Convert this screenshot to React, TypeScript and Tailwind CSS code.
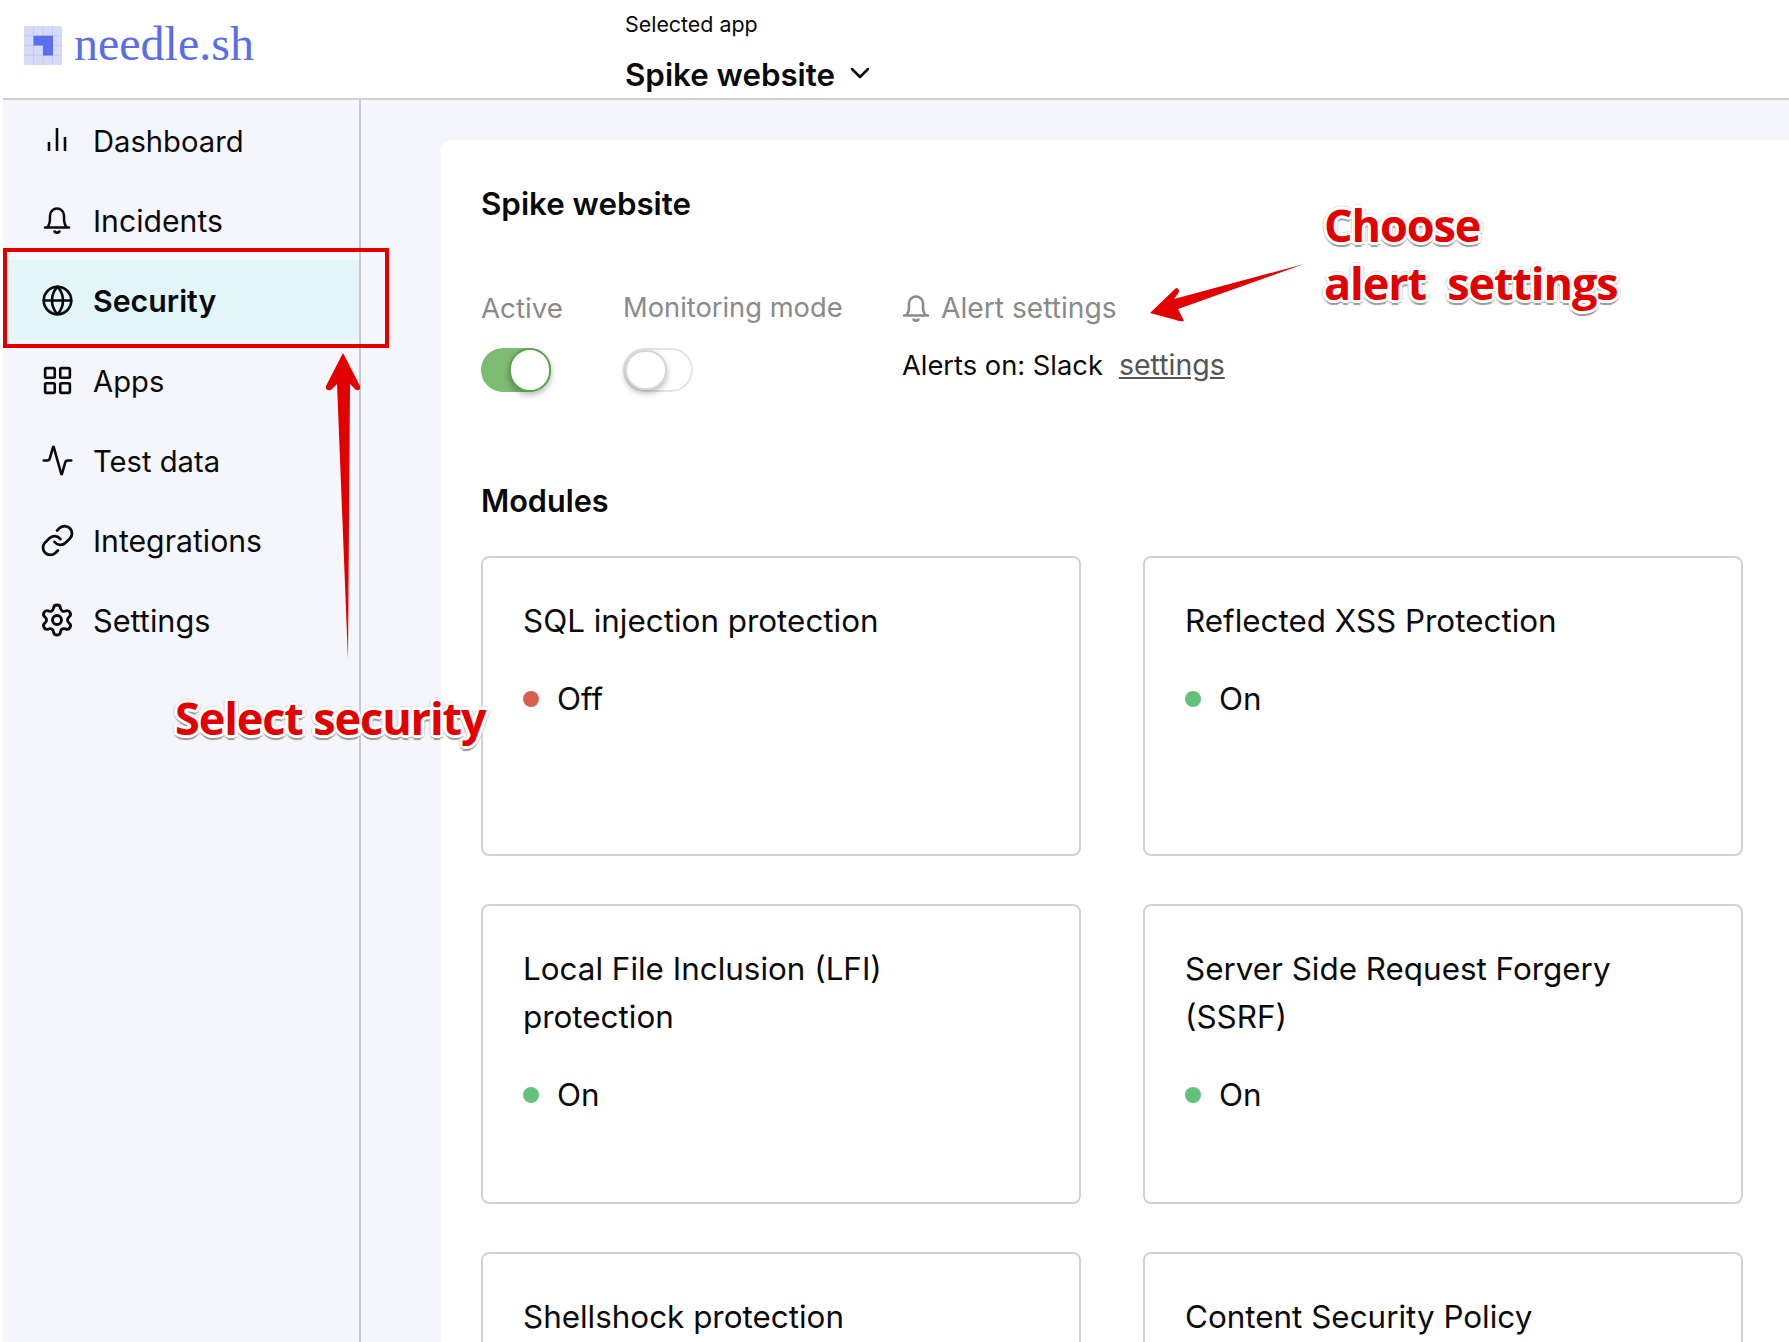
import { Activity, ChevronDown, Globe, LayoutGrid, Link, Settings } from "lucide-react";

function BarsIcon({ className }: { size?: number; strokeWidth?: number; className?: string }) {
  return (
    <svg width="32" height="32" viewBox="0 0 32 32" fill="none" stroke="currentColor" strokeWidth="2.600" className={className}>
      <path d="M8 27V18M16 27V4M24 27V13" />
    </svg>
  );
}

function BellIcon({ className }: { size?: number; strokeWidth?: number; className?: string }) {
  return (
    <svg width="32" height="32" viewBox="0 0 32 32" fill="none" stroke="currentColor" strokeWidth="2.500" strokeLinecap="round" className={className}>
      <path d="M4 23.500H28M6.500 23Q9 20 9 14V11.500A7 7 0 0 1 23 11.500V14Q23 20 25.500 23" />
      <path d="M13.500 27.500Q16 30 18.500 27.500" />
    </svg>
  );
}

const navItems = [
  { label: "Dashboard", icon: BarsIcon, size: 32, text: "text-[29.200px]" },
  { label: "Incidents", icon: BellIcon, size: 32, text: "text-[30.200px]" },
  { label: "Security", icon: Globe, size: 33, text: "text-[30.300px] font-semibold", active: true },
  { label: "Apps", icon: LayoutGrid, size: 33, text: "text-[29.200px]" },
  { label: "Test data", icon: Activity, size: 33, text: "text-[29.200px]" },
  { label: "Integrations", icon: Link, size: 35, text: "text-[30.200px]" },
  { label: "Settings", icon: Settings, size: 36, text: "text-[30.700px]" },
];

const modules = [
  { title: "SQL injection protection", on: false },
  { title: "Reflected XSS Protection", on: true },
  { title: "Local File Inclusion (LFI) protection", on: true },
  { title: "Server Side Request Forgery (SSRF)", on: true },
  { title: "Shellshock protection", on: true },
  { title: "Content Security Policy", on: true },
];

const noteClass =
  "absolute font-['Open_Sans',sans-serif] text-[45px] font-bold tracking-[-1.100px] text-[#e30000] whitespace-pre leading-none [text-shadow:3px_0_0_#fff,-3px_0_0_#fff,0_3px_0_#fff,0_-3px_0_#fff,2px_2px_0_#fff,-2px_2px_0_#fff,2px_-2px_0_#fff,-2px_-2px_0_#fff,3px_1px_0_#fff,-3px_1px_0_#fff,0_4.500px_1px_#9a9a9a,2.500px_3px_1px_#a8a8a8,-2.500px_3px_1px_#a8a8a8,4px_0_1px_#cfcfcf,-4px_0_1px_#cfcfcf,0_-4px_1px_#e2e2e2]";

function Logo() {
  return (
    <svg width="38" height="39" viewBox="0 0 38 39" className="shrink-0">
      <rect width="38" height="39" fill="#d5daf9" />
      <path d="M9.500 0V39M19 0V39M28.500 0V39M0 9.750H38M0 19.500H38M0 29.250H38" stroke="#c3caf5" strokeWidth="1" />
      <path d="M9.500 9.750H29V29.500H19V19.500H9.500Z" fill="#5a6ff0" />
    </svg>
  );
}

function Toggle({ on }: { on: boolean }) {
  return (
    <div
      className={`flex h-[44px] w-[70px] rounded-full ${
        on ? "justify-end bg-[#7dbb72]" : "justify-start border-2 border-[#e4e4e4] bg-white"
      }`}
    >
      <div
        className={`h-full w-[42px] rounded-full bg-white shadow-[0_3px_6px_rgba(0,0,0,0.28)] ${
          on ? "border-2 border-[#5f9f55]" : "border-2 border-[#d6d6d6]"
        }`}
      />
    </div>
  );
}

function ModuleCard({ title, on }: { title: string; on: boolean }) {
  return (
    <div className="h-[300px] rounded-lg border-2 border-[#d2d2d2] bg-white pl-[40px] pr-[70px] pt-[39px] text-[31.400px] leading-[48px] text-[#0a0a0a]">
      <p>{title}</p>
      <div className="mt-[30px] flex items-center gap-[18px]">
        <span className={`h-[16px] w-[16px] rounded-full ${on ? "bg-[#62c27a]" : "bg-[#d9604c]"}`} />
        <span>{on ? "On" : "Off"}</span>
      </div>
    </div>
  );
}

export default function App() {
  return (
    <div className="relative h-[1342px] w-full overflow-hidden bg-white pl-[3px] font-['Inter',sans-serif] text-[#0a0a0a]">
      <header className="flex h-[100px] border-b-2 border-[#d1d1d6]">
        <div className="flex w-[622px] items-start gap-[12px] pl-[21px] pt-[26px]">
          <Logo />
          <span className="font-['Liberation_Serif',serif] text-[48px] leading-[36px] text-[#5b6ee8]">needle.sh</span>
        </div>
        <div className="pt-[10px]">
          <p className="text-[21.400px] leading-[28px]">Selected app</p>
          <div className="mt-[14px] flex items-center gap-[9px]">
            <span className="text-[31.300px] font-semibold leading-[46px]">Spike website</span>
            <ChevronDown size={32} strokeWidth={1.9} className="-mt-[4px]" />
          </div>
        </div>
      </header>

      <div className="flex h-[1242px]">
        <aside className="w-[358px] shrink-0 border-r-2 border-[#c9cacd] bg-[#f4f6fb]">
          {navItems.map((item) => (
            <div
              key={item.label}
              className={`flex h-[80px] items-center gap-[20px] pl-[38px] ${item.active ? "bg-[#e2f6f9]" : ""}`}
            >
              <span className="flex h-[32px] w-[32px] shrink-0 items-center justify-center">
                <item.icon size={item.size} strokeWidth={1.9} className="shrink-0" />
              </span>
              <span className={`pt-[3px] ${item.text}`}>{item.label}</span>
            </div>
          ))}
        </aside>

        <main className="flex-1 bg-[#f4f6fb] pl-[80px] pt-[40px]">
          <section className="h-full rounded-tl-xl bg-white pl-[40px] pr-[46px] pt-[41px]">
            <h1 className="text-[31.300px] font-semibold leading-[46px]">Spike website</h1>

            <div className="mt-[61px] flex leading-[40px]">
              <div className="w-[142px]">
                <p className="text-[27.700px] text-[#8a8a8a]">Active</p>
                <div className="mt-[20px]">
                  <Toggle on />
                </div>
              </div>
              <div className="w-[279px]">
                <p className="text-[27.300px] text-[#8a8a8a]">Monitoring mode</p>
                <div className="mt-[20px]">
                  <Toggle on={false} />
                </div>
              </div>
              <div>
                <p className="flex items-center gap-[9px] text-[28.200px] text-[#8a8a8a]">
                  <BellIcon className="-ml-[2px]" />
                  Alert settings
                </p>
                <p className="mt-[17px] text-[27.300px]">
                  Alerts on: Slack
                  <span className="ml-[16px] text-[28.500px] text-[#555555] underline">settings</span>
                </p>
              </div>
            </div>

            <h2 className="mt-[86px] text-[30.600px] font-semibold leading-[46px]">Modules</h2>

            <div className="mt-[32px] grid grid-cols-2 gap-x-[62px] gap-y-[48px]">
              {modules.map((m) => (
                <ModuleCard key={m.title} title={m.title} on={m.on} />
              ))}
            </div>
          </section>
        </main>
      </div>

      {/* annotations over the page */}
      <div className="absolute left-[3px] top-[248px] h-[100px] w-[386px] border-4 border-[#e00000]" />

      <svg className="pointer-events-none absolute left-0 top-0" width="1789" height="1342" viewBox="0 0 1789 1342">
        <path d="M343 353L360 386Q361 391 356 390L350 384L348 660L337 384L331 390Q325 391 326 386Z" fill="#e30000" />
        <path d="M1304 264L1178 309L1184 321Q1180 322 1176 320L1150 313L1176 288Q1179 288 1179 292L1174 299Z" fill="#e30000" />
      </svg>

      <p className={`${noteClass} left-[175px] top-[695px]`}>Select security</p>
      <p className={`${noteClass} left-[1324px] top-[202px]`}>Choose</p>
      <p className={`${noteClass} left-[1324px] top-[260px]`}>alert  settings</p>
    </div>
  );
}
